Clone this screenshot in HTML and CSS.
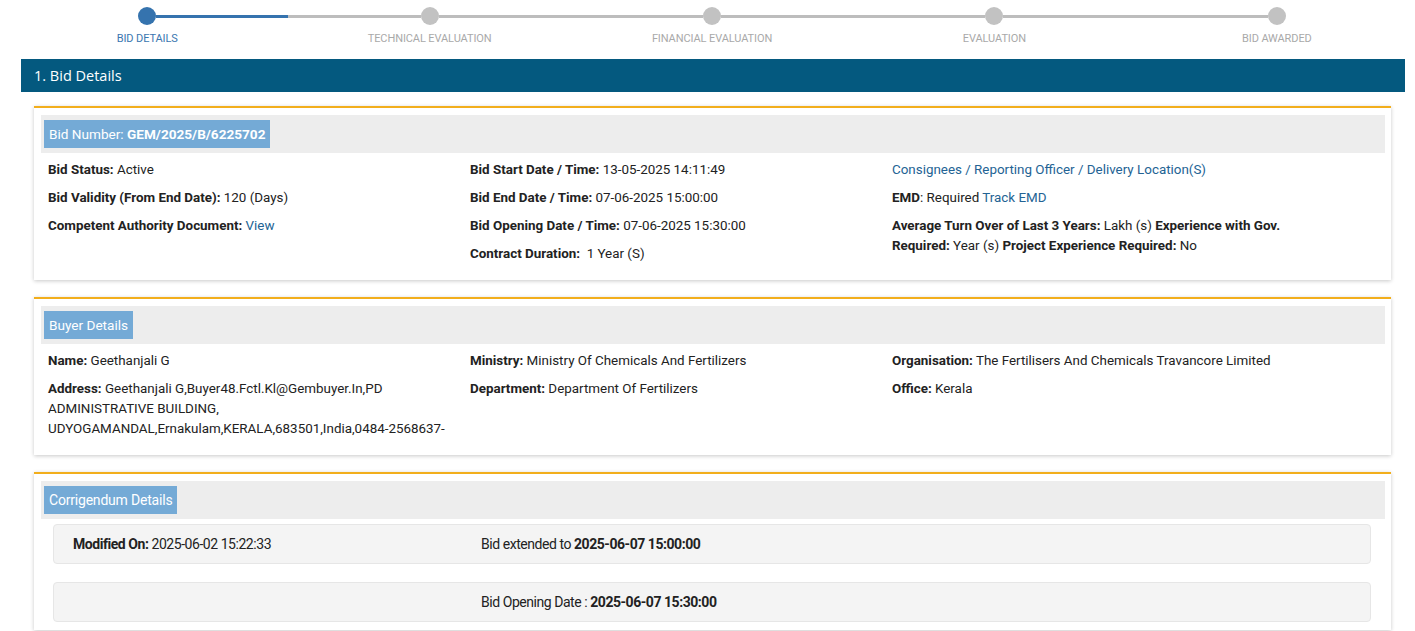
FILE: index.html
```html
<!DOCTYPE html>
<html lang="en">
  <head>
    <meta charset="UTF-8" />
    <title>Bid Details</title>
    <link rel="stylesheet" href="styles.css">
  </head>
  <body>
    <div class="stepper">
      <div class="step active">
        <div class="step-track"><span class="seg seg-none"></span><span class="dot"></span><span class="seg seg-half"></span></div>
        <div class="step-label">BID DETAILS</div>
      </div>
      <div class="step">
        <div class="step-track"><span class="seg"></span><span class="dot"></span><span class="seg"></span></div>
        <div class="step-label">TECHNICAL EVALUATION</div>
      </div>
      <div class="step">
        <div class="step-track"><span class="seg"></span><span class="dot"></span><span class="seg"></span></div>
        <div class="step-label">FINANCIAL EVALUATION</div>
      </div>
      <div class="step">
        <div class="step-track"><span class="seg"></span><span class="dot"></span><span class="seg"></span></div>
        <div class="step-label">EVALUATION</div>
      </div>
      <div class="step">
        <div class="step-track"><span class="seg"></span><span class="dot"></span><span class="seg seg-none"></span></div>
        <div class="step-label">BID AWARDED</div>
      </div>
    </div>

    <div class="panel-title">1. Bid Details</div>

    <div class="card">
      <div class="card-band">
        <span class="badge">Bid Number: <b>GEM/2025/B/6225702</b></span>
      </div>
      <div class="card-body">
        <div class="col">
          <p><b>Bid Status:</b> Active</p>
          <p><b>Bid Validity (From End Date):</b> 120 (Days)</p>
          <p><b>Competent Authority Document:</b> <a href="#">View</a></p>
        </div>
        <div class="col">
          <p><b>Bid Start Date / Time:</b> 13-05-2025 14:11:49</p>
          <p><b>Bid End Date / Time:</b> 07-06-2025 15:00:00</p>
          <p><b>Bid Opening Date / Time:</b> 07-06-2025 15:30:00</p>
          <p><b>Contract Duration:</b>&nbsp; 1 Year (S)</p>
        </div>
        <div class="col">
          <p><a href="#">Consignees / Reporting Officer / Delivery Location(S)</a></p>
          <p><b>EMD</b>: Required <a href="#">Track EMD</a></p>
          <p><b>Average Turn Over of Last 3 Years:</b> Lakh (s) <b>Experience with Gov. Required:</b> Year (s) <b>Project Experience Required:</b> No</p>
        </div>
      </div>
    </div>

    <div class="card">
      <div class="card-band">
        <span class="badge">Buyer Details</span>
      </div>
      <div class="card-body">
        <div class="col">
          <p><b>Name:</b> Geethanjali G</p>
          <p><b>Address:</b> Geethanjali G,Buyer48.Fctl.Kl@Gembuyer.In,PD ADMINISTRATIVE BUILDING, UDYOGAMANDAL,Ernakulam,KERALA,683501,India,0484-2568637-</p>
        </div>
        <div class="col">
          <p><b>Ministry:</b> Ministry Of Chemicals And Fertilizers</p>
          <p><b>Department:</b> Department Of Fertilizers</p>
        </div>
        <div class="col">
          <p><b>Organisation:</b> The Fertilisers And Chemicals Travancore Limited</p>
          <p><b>Office:</b> Kerala</p>
        </div>
      </div>
    </div>

    <div class="card">
      <div class="card-band">
        <span class="badge badge-narrow">Corrigendum Details</span>
      </div>
      <div class="corr-list">
        <div class="corr-row">
          <div class="corr-cell"><b>Modified On:</b> 2025-06-02 15:22:33</div>
          <div class="corr-cell">Bid extended to <b>2025-06-07 15:00:00</b></div>
        </div>
        <div class="corr-row">
          <div class="corr-cell"></div>
          <div class="corr-cell">Bid Opening Date : <b>2025-06-07 15:30:00</b></div>
        </div>
      </div>
    </div>
  </body>
</html>
```

FILE: styles.css
```css
:root {
  --brand: #04597f;
  --step-blue: #3573ae;
  --step-gray: #bdbdbd;
  --badge: #74aad6;
  --accent: #f2ae1c;
  --band: #ededed;
  --text: #222222;
  --link: #236394;
}

* {
  box-sizing: border-box;
  margin: 0;
  padding: 0;
}

body {
  font-family: Roboto, "Liberation Sans", Arial, sans-serif;
  font-size: 13.4px;
  color: var(--text);
  background: #ffffff;
  overflow-x: hidden;
}

a {
  color: var(--link);
  text-decoration: none;
}

/* progress steps */
.stepper {
  display: flex;
  width: 1412px;
  margin-left: 6px;
  padding-top: 7px;
}

.step {
  flex: 1;
  display: flex;
  flex-direction: column;
  align-items: center;
}

.step-track {
  display: flex;
  align-items: center;
  width: 100%;
  height: 18px;
}

.seg {
  flex: 1;
  height: 3px;
  background: var(--step-gray);
}

.seg-none {
  background: transparent;
}

.step.active .seg-half {
  background: var(--step-blue);
}

.dot {
  width: 18px;
  height: 18px;
  border-radius: 50%;
  background: #c2c2c2;
  flex: none;
}

.step.active .dot {
  background: var(--step-blue);
}

.step-label {
  margin-top: 7px;
  font-size: 11px;
  line-height: 14px;
  letter-spacing: -0.1px;
  color: #a9a9a9;
}

.step.active .step-label {
  color: #3b76b0;
}

/* section title */
.panel-title {
  margin: 13px 0 0 21px;
  width: 1384px;
  height: 33px;
  line-height: 33px;
  padding-left: 13px;
  background: var(--brand);
  color: #ffffff;
  font-family: "Open Sans", "Noto Sans", sans-serif;
  font-size: 14.5px;
}

/* cards */
.card {
  margin: 14px 0 17px 34px;
  width: 1357px;
  border-top: 2px solid var(--accent);
  background: #ffffff;
  box-shadow: 0 1px 4px rgba(0, 0, 0, 0.22);
  padding: 7px 6px 8px 7px;
}

.card + .card {
  margin-top: 0;
}

.card-band {
  background: var(--band);
  height: 38px;
  padding: 5px 3px;
}

.badge {
  display: inline-block;
  height: 28px;
  line-height: 28px;
  padding: 0 5px;
  background: var(--badge);
  color: #ffffff;
  font-size: 13.6px;
}

.badge-narrow {
  font-size: 14px;
  letter-spacing: -0.2px;
}

.card-body {
  display: grid;
  grid-template-columns: 422px 422px 422px;
  padding-top: 7px;
}

.col {
  padding-left: 7px;
  padding-right: 10px;
}

.col p {
  line-height: 20px;
  margin-bottom: 8px;
}

/* corrigendum rows */
.corr-list {
  display: flex;
  flex-direction: column;
  gap: 18px;
  padding: 5px 14px 0 12px;
}

.corr-row {
  display: grid;
  grid-template-columns: 408px 1fr;
  height: 40px;
  align-items: center;
  padding-left: 19px;
  background: #f4f4f4;
  border: 1px solid #e6e6e6;
  border-radius: 4px;
  font-size: 14px;
  letter-spacing: -0.45px;
}
```
